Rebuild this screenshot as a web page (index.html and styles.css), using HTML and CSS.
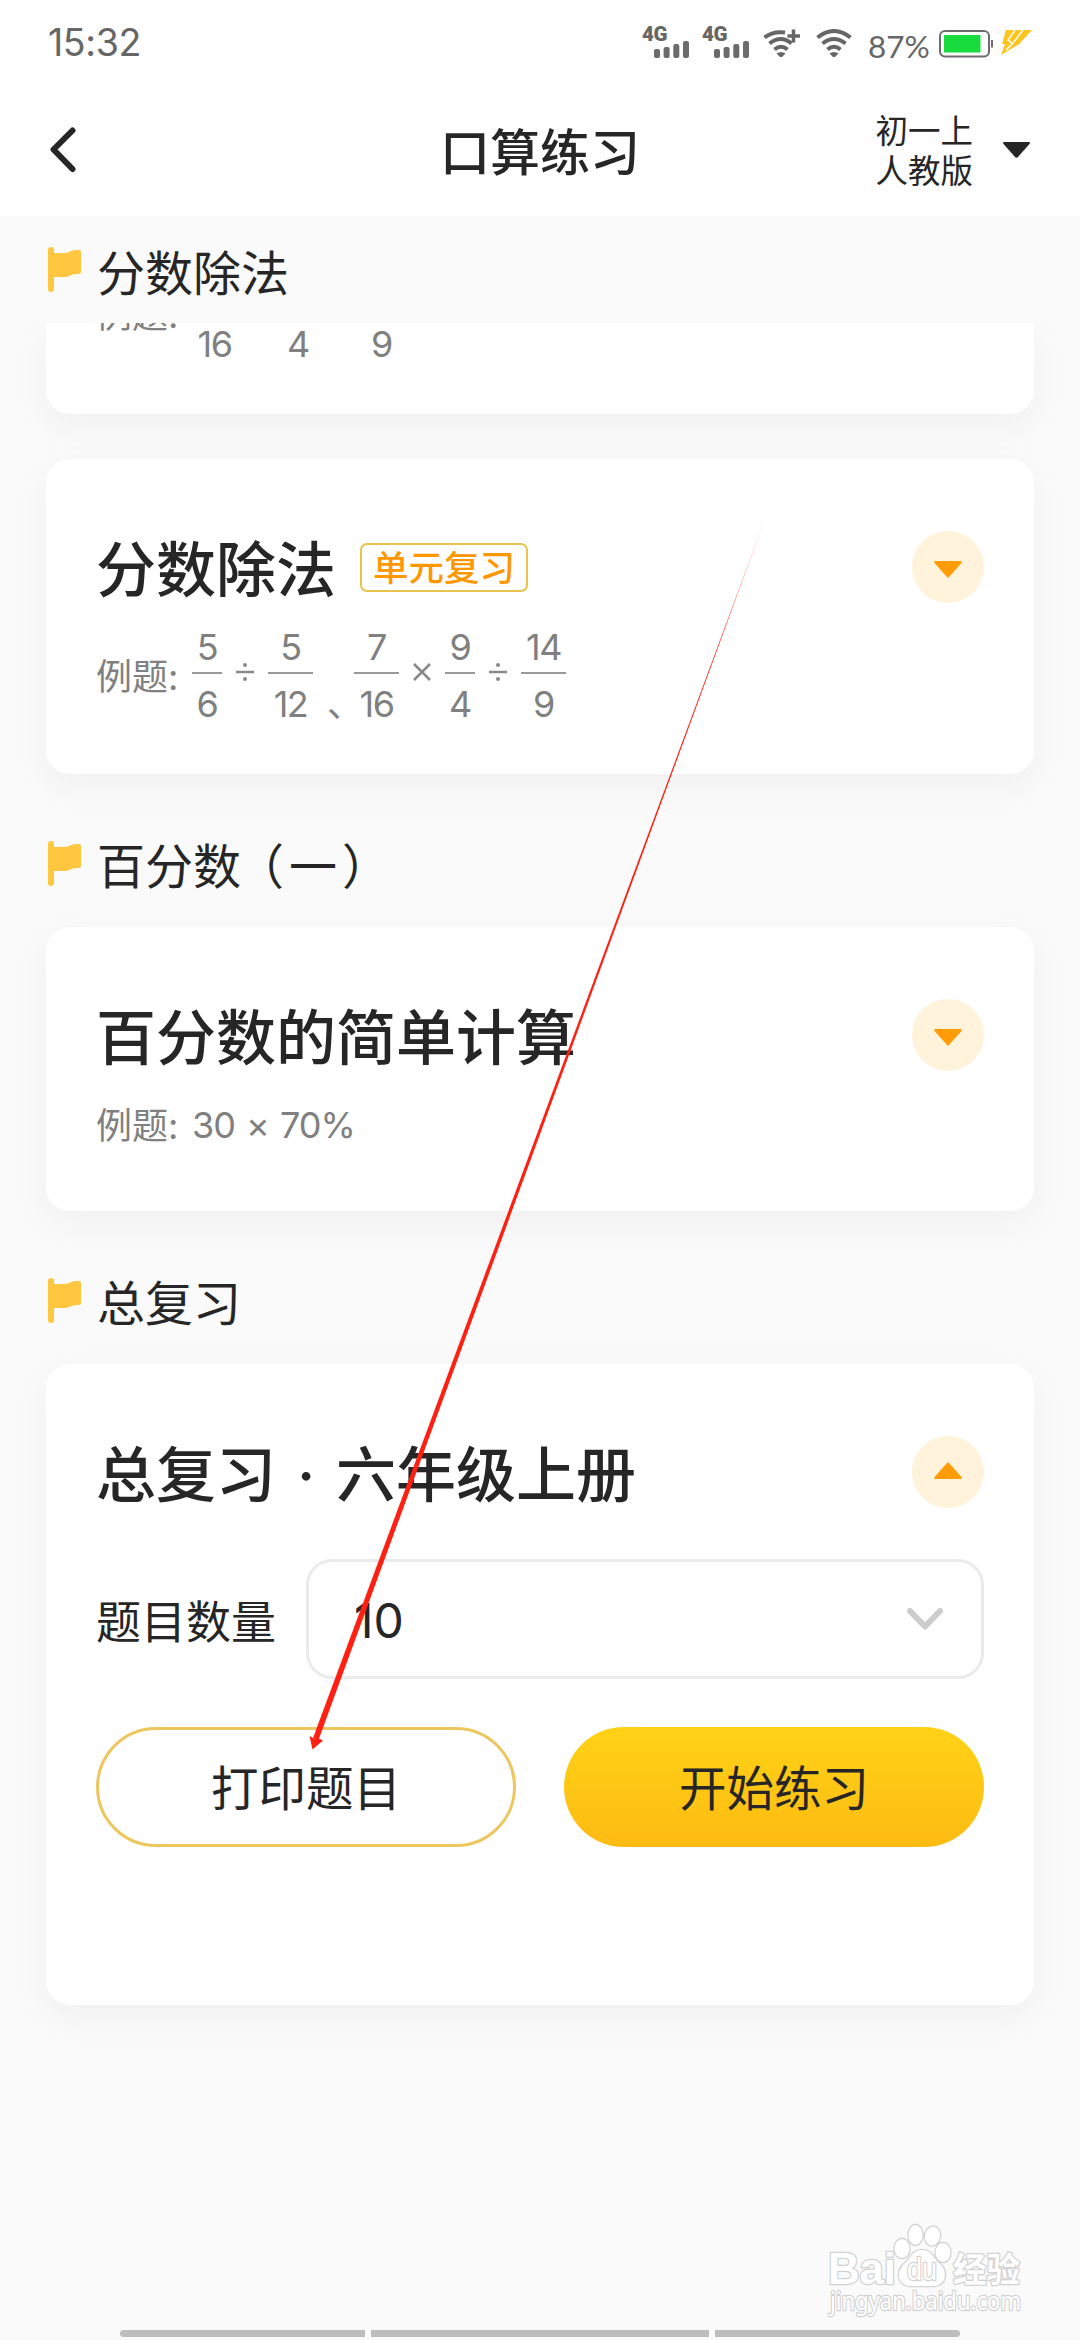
FILE: index.html
```html
<!DOCTYPE html>
<html lang="zh-CN">
<head>
<meta charset="utf-8">
<title>口算练习</title>
<link rel="stylesheet" href="styles.css">
</head>
<body>
<svg class="defs" width="0" height="0" aria-hidden="true">
  <symbol id="flag" viewBox="0 0 33 45"><path d="M0 3a3 3 0 0 1 6 0v3h11c4 0 6-3 11-3h3q2 0 2 2v20q0 2-2 2h-3c-5 0-6 3-11 3H6v12a3 3 0 0 1-6 0z" fill="#ffc740"/></symbol>
  <symbol id="signal" viewBox="0 0 35 17"><g fill="#6b6b6b"><rect y="8" width="6" height="9" rx="2"/><rect x="9.600" y="6" width="6" height="11" rx="2"/><rect x="19.300" y="3" width="6" height="14" rx="2"/><rect x="29" width="6" height="17" rx="2"/></g></symbol>
  <symbol id="wifi" viewBox="0 0 36 28"><g fill="none" stroke="#666" stroke-width="4"><path d="M1.500 8.500Q18-4.500 34.500 8.500"/><path d="M6.500 14.500Q18 5.500 29.500 14.500"/><path d="M11.500 20.500Q18 15 24.500 20.500"/></g><path d="M13.500 24.500Q18 21.500 22.500 24.500L18 29z" fill="#666"/></symbol>
</svg>
<div class="screen">
  <header class="top">
    <div class="status">
      <span class="time">15:32</span>
      <div class="indicators">
        <span class="cell"><b>4G</b><svg class="bars"><use href="#signal"/></svg></span>
        <span class="cell"><b>4G</b><svg class="bars"><use href="#signal"/></svg></span>
        <svg class="wifi wifi-plus" viewBox="0 0 37 28"><g fill="none" stroke="#666" stroke-width="4"><path d="M1.500 8.500Q10 1.800 22 3.500"/><path d="M6.500 14.500Q18 5.500 28.500 14.500"/><path d="M11.500 20.500Q18 15 24.500 20.500"/><path d="M24.500 7H37M30.500 .5v13" stroke-width="3.500"/></g><path d="M13.500 24.500Q18 21.500 22.500 24.500L18 29z" fill="#666"/></svg>
        <svg class="wifi"><use href="#wifi"/></svg>
        <span class="percent">87%</span>
        <svg class="battery" width="54" height="28" viewBox="0 0 54 28"><rect x="1" y="1" width="49" height="25.500" rx="5" fill="#fff" stroke="#6e6a70" stroke-width="2"/><rect x="5" y="5" width="36.500" height="17.500" fill="#18db3d"/><path d="M53 10v7.500" stroke="#6e6a70" stroke-width="2"/></svg>
        <svg class="bolt" width="31" height="26" viewBox="0 0 31 26"><path d="M5 0H31L19 13h1L0 25l4-11H1z" fill="#ffc51c"/><path d="M14 0 7 10 12 14M22 0 12 13 5 20" stroke="#fff" stroke-width="1.500" fill="none"/></svg>
      </div>
    </div>
    <nav class="nav">
      <svg class="back" width="26" height="46" viewBox="0 0 26 46"><path d="M22.500 3.500 3.500 22.500 22.500 42" fill="none" stroke="#262626" stroke-width="6" stroke-linecap="round" stroke-linejoin="round"/></svg>
      <h1>口算练习</h1>
      <div class="grade"><span>初一上<br>人教版</span><svg width="27" height="16" viewBox="0 0 27 16"><path d="M1 0H26Q28 0 26 2.500L15 15Q13.500 16.500 12 15L1 2.500Q-1 0 1 0z" fill="#262626"/></svg></div>
    </nav>
  </header>

  <main>
    <h2 class="section first"><svg><use href="#flag"/></svg>分数除法</h2>
    <div class="scroller">
      <article class="card partial">
        <div class="example"><span class="label">例题:</span>
          <span class="math"><i class="den two">16</i><i class="den one">4</i><i class="den two">9</i></span>
        </div>
      </article>

      <article class="card unit">
        <div class="head"><h3>分数除法</h3><span class="tag">单元复习</span><span class="toggle"><svg viewBox="0 0 28 17"><path d="M1 0H27Q28.500 1 27 2.500L15 16q-1 1-2 0L1 2.500Q-.5 1 1 0z"/></svg></span></div>
        <div class="example"><span class="label">例题:</span>
          <span class="math">
            <span class="frac one"><i>5</i><i>6</i></span><svg class="op" viewBox="0 0 18 18"><path d="M0 9H18"/><circle cx="9" cy="2" r="2"/><circle cx="9" cy="16" r="2"/></svg><span class="frac two"><i>5</i><i>12</i></span><span class="comma">、</span><span class="frac two"><i>7</i><i>16</i></span><svg class="op" viewBox="0 0 18 18"><path d="M1 1 17 17M17 1 1 17"/></svg><span class="frac one"><i>9</i><i>4</i></span><svg class="op" viewBox="0 0 18 18"><path d="M0 9H18"/><circle cx="9" cy="2" r="2"/><circle cx="9" cy="16" r="2"/></svg><span class="frac two"><i>14</i><i>9</i></span>
          </span>
        </div>
      </article>

      <h2 class="section"><svg><use href="#flag"/></svg><span>百分数<span class="paren-open">（</span>一<span class="paren-close">）</span></span></h2>
      <article class="card percent-card">
        <div class="head"><h3>百分数的简单计算</h3><span class="toggle"><svg viewBox="0 0 28 17"><path d="M1 0H27Q28.500 1 27 2.500L15 16q-1 1-2 0L1 2.500Q-.5 1 1 0z"/></svg></span></div>
        <div class="example"><span class="label">例题:</span><span class="plain">30 × 70%</span></div>
      </article>

      <h2 class="section"><svg><use href="#flag"/></svg>总复习</h2>
      <article class="card review">
        <div class="head"><h3>总复习<span class="dot">·</span>六年级上册</h3><span class="toggle up"><svg viewBox="0 0 28 17"><path d="M1 0H27Q28.500 1 27 2.500L15 16q-1 1-2 0L1 2.500Q-.5 1 1 0z"/></svg></span></div>
        <div class="count"><span>题目数量</span><div class="select"><span>10</span><svg width="36" height="22" viewBox="0 0 36 22"><path d="M3 3 18 18.500 33 3" fill="none" stroke="#ccc" stroke-width="6" stroke-linecap="round" stroke-linejoin="round"/></svg></div></div>
        <div class="actions"><button class="print">打印题目</button><button class="start">开始练习</button></div>
      </article>
    </div>
  </main>

  <svg class="pointer" width="480" height="1260" viewBox="300 500 480 1260">
    <defs><linearGradient id="fade" gradientUnits="userSpaceOnUse" x1="772" y1="500" x2="720" y2="640"><stop offset="0" stop-color="#ff2012" stop-opacity=".2"/><stop offset="1" stop-color="#ff2012"/></linearGradient></defs>
    <path d="M772 500 313 1738 318.500 1740z" fill="url(#fade)"/>
    <path d="M312.500 1749.500 309.500 1736 314 1738.500 320 1739 323 1740.500z" fill="#ff2012"/>
  </svg>

  <svg class="watermark" width="210" height="110" viewBox="820 2215 210 110">
    <g fill="#fff" stroke="#d2d2d2" stroke-width="2.500" stroke-linejoin="round" paint-order="stroke">
      <text class="wm-latin" x="828" y="2284" textLength="68" lengthAdjust="spacingAndGlyphs">Bai</text>
      <ellipse cx="902" cy="2248.500" rx="7.500" ry="9.500"/><ellipse cx="915.500" cy="2235" rx="7" ry="10"/><ellipse cx="932.500" cy="2236" rx="7.500" ry="9.500" transform="rotate(12 932.500 2236)"/><ellipse cx="943" cy="2252.500" rx="7.500" ry="9.500"/>
      <path d="M922 2250c10 0 11 8 18 14s8 21-6 22h-24c-14-1-13-16-6-22s8-14 18-14z"/>
      <text class="wm-du" x="907" y="2280" textLength="30" lengthAdjust="spacingAndGlyphs">du</text>
      <text class="wm-cjk" x="953" y="2282" textLength="67" lengthAdjust="spacingAndGlyphs">经验</text>
      <text class="wm-url" x="830" y="2310" textLength="191" lengthAdjust="spacingAndGlyphs">jingyan.baidu.com</text>
    </g>
  </svg>

  <footer class="gestures"><i></i><i></i><i></i></footer>
</div>
</body>
</html>
```
FILE: styles.css
```css
* { box-sizing: border-box; margin: 0; }
body { background: #fafafa; }
.defs { position: absolute; }
.screen {
  position: relative;
  display: flex;
  flex-direction: column;
  width: 1080px;
  height: 2340px;
  overflow: hidden;
  background: #fafafa;
  color: #262626;
  font-family: Inter, "Noto Sans CJK SC", sans-serif;
}
i { font-style: normal; }

/* status bar and title */
.top { height: 216px; background: #fefefe; flex: none; position: relative; z-index: 2; }
.status { height: 85px; padding: 0 48px; display: flex; justify-content: space-between; align-items: center; color: #666; }
.time { font-size: 37.5px; line-height: 85px; letter-spacing: -.4px; }
.indicators { display: flex; align-items: center; height: 85px; }
.cell { display: flex; flex-direction: column; width: 47px; margin-right: 13px; height: 31px; font: 700 20.5px/15px Roboto, sans-serif; letter-spacing: -.5px; }
.bars { width: 35px; height: 17px; margin-left: 12px; margin-top: -1px; }
.wifi { width: 36px; height: 28px; margin-right: 16px; }
.wifi-plus { margin-left: 1px; width: 37px; }
.percent { font: 400 31.500px/40px Lato, sans-serif; width: 60px; margin: 6px 11px 0 0; }
.battery { margin: 2px 8px 0 0; }
.nav { height: 130px; padding: 0 50px; display: grid; grid-template-columns: 330px 1fr 330px; align-items: center; }
h1 { font-size: 50px; line-height: 60px; font-weight: 500; text-align: center; padding-top: 5px; }
.grade { display: flex; justify-content: flex-end; align-items: center; gap: 30px; font-size: 32.5px; line-height: 39.5px; }
.grade span { padding-top: 3px; }

/* lists */
main { flex: 1; display: flex; flex-direction: column; }
.section { display: flex; align-items: center; gap: 16px; padding: 25px 0 0 48px; height: 153px; font-size: 48px; font-weight: 400; }
.section svg { width: 33px; height: 45px; }
.section.first { height: 107px; padding-top: 0; }
.paren-open { margin: 0 5px 0 -5px; }
.paren-close { margin-left: 5px; }
.scroller { flex: 1; overflow: hidden; }
.card { margin: 0 46px; padding: 0 50px; border-radius: 24px; background: #fff; box-shadow: 0 12px 40px rgba(0,0,0,.045); }
.partial { height: 91px; margin-bottom: 45px; border-radius: 0 0 24px 24px; }
.unit { height: 315px; padding-top: 72px; }
.percent-card { height: 284px; padding-top: 72px; }
.review { height: 641px; padding-top: 72px; }
.head { display: flex; align-items: center; height: 72px; }
h3 { font-size: 60px; line-height: 72px; font-weight: 500; padding-top: 5px; }
.dot { display: inline-block; width: 60px; text-align: center; }
.tag { margin-left: 24px; width: 168px; height: 49px; border: 2px solid #e8c34c; border-radius: 7px; color: #ff9800; font-size: 35.5px; line-height: 48px; font-weight: 500; text-align: center; }
.toggle { display: flex; align-items: center; justify-content: center; width: 72px; height: 72px; border-radius: 50%; margin-left: auto; background: #fff3dc; }
.toggle svg { width: 28px; height: 17px; fill: #ff9c08; margin-top: 4px; }
.toggle.up svg { transform: rotate(180deg); margin-top: -4px; }

/* examples */
.example { display: flex; align-items: center; color: #808080; font-size: 36px; }
.label { width: 96px; font-size: 36px; flex: none; }
.math { display: flex; align-items: center; }
.unit .example { height: 107px; margin-top: 19px; }
.unit .label { padding-bottom: 4px; }
.frac { display: flex; flex-direction: column; }
.frac i { height: 50px; line-height: 51px; text-align: center; letter-spacing: -1.5px; }
.frac i + i { height: 57px; padding-top: 5px; border-top: 2px solid #999; }
.one { width: 30px; }
.two { width: 45px; }
.op { width: 18px; height: 18px; margin: -8px 14px 0; fill: #888; stroke: #888; stroke-width: 2.5; flex: none; }
.op circle { stroke: none; }
.comma { width: 41px; text-indent: 14px; align-self: flex-end; line-height: 50px; white-space: nowrap; }
.partial .example { height: 40px; align-items: flex-start; }
.partial .label { margin-top: -35px; line-height: 54px; }
.partial .math { gap: 46px; }
.den { text-align: center; line-height: 42px; letter-spacing: -1.5px; }
.percent-card .example { margin-top: 28px; height: 52px; }
.percent-card .label { padding-bottom: 4px; }
.plain { letter-spacing: -1px; word-spacing: 2px; }

/* practice form */
.count { display: flex; align-items: center; justify-content: space-between; margin-top: 51px; font-size: 45px; }
.select { display: flex; align-items: center; justify-content: space-between; width: 678px; height: 120px; padding: 0 38px 0 45px; border: 3px solid #ebebeb; border-radius: 26px; font-size: 48px; }
.select span { padding-top: 3px; }
.select svg { margin-top: -1px; }
.actions { display: flex; justify-content: space-between; margin-top: 48px; }
button { width: 420px; height: 120px; border: 0; border-radius: 60px; padding: 4px 0 0; font: 400 47.500px/60px Inter, "Noto Sans CJK SC", sans-serif; color: #262626; }
.print { border: 3px solid #edc65d; background: #fff; }
.start { background: linear-gradient(#ffd216, #fdbb12); }

/* overlays */
.pointer { position: absolute; left: 300px; top: 500px; z-index: 3; }
.watermark { position: absolute; left: 820px; top: 2215px; }
.wm-latin { font: 700 44px "Liberation Sans", sans-serif; }
.wm-du { font: 400 31px "Liberation Sans", sans-serif; }
.wm-cjk { font: 700 34px "Noto Sans CJK SC", sans-serif; }
.wm-url { font: 400 25px "Noto Sans", sans-serif; }
.gestures { position: absolute; left: 120px; top: 2330px; display: flex; gap: 6px; }
.gestures i { width: 245px; height: 7px; background: #bdbdbd; }
.gestures i:first-child { border-radius: 4px 0 0 4px; }
.gestures i:nth-child(2) { width: 338px; }
.gestures i:last-child { border-radius: 0 4px 4px 0; }
```
